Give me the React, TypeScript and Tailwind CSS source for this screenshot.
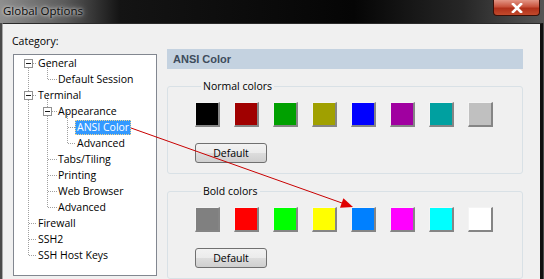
import React from 'react';

type Row = { label: string; level: 0 | 1 | 2; selected?: boolean };

const rows: Row[] = [
  { label: 'General', level: 0 },
  { label: 'Default Session', level: 1 },
  { label: 'Terminal', level: 0 },
  { label: 'Appearance', level: 1 },
  { label: 'ANSI Color', level: 2, selected: true },
  { label: 'Advanced', level: 2 },
  { label: 'Tabs/Tiling', level: 1 },
  { label: 'Printing', level: 1 },
  { label: 'Web Browser', level: 1 },
  { label: 'Advanced', level: 1 },
  { label: 'Firewall', level: 0 },
  { label: 'SSH2', level: 0 },
  { label: 'SSH Host Keys', level: 0 },
];

const indent = ['pl-[22px]', 'pl-[42px]', 'pl-[61px]'];

const normalColors = [
  'bg-[#000000]',
  'bg-[#a00000]',
  'bg-[#00a000]',
  'bg-[#a0a000]',
  'bg-[#0000ff]',
  'bg-[#a000a0]',
  'bg-[#00a0a0]',
  'bg-[#c0c0c0]',
];

const boldColors = [
  'bg-[#808080]',
  'bg-[#ff0000]',
  'bg-[#00ff00]',
  'bg-[#ffff00]',
  'bg-[#0080ff]',
  'bg-[#ff00ff]',
  'bg-[#00ffff]',
  'bg-[#ffffff]',
];

// dotted connector lines + expander boxes of the tree view
function TreeLines() {
  const cy = (i: number) => 8 + 16 * i + 0.5;
  const h = (x1: number, x2: number, i: number) => (
    <line key={`h${i}`} x1={x1 + 0.5} x2={x2 + 0.5} y1={cy(i)} y2={cy(i)} />
  );
  const v = (x: number, a: number, b: number) => (
    <line key={`v${x}${a}`} x1={x + 0.5} x2={x + 0.5} y1={cy(a)} y2={cy(b)} />
  );
  const box = (x: number, i: number) => (
    <g key={`b${i}`}>
      <rect x={x - 4 + 0.5} y={cy(i) - 4.5} width={8} height={8} fill="#fff" stroke="#919191" />
      <line x1={x - 2} x2={x + 3} y1={cy(i)} y2={cy(i)} stroke="#1c1c1c" />
    </g>
  );
  return (
    <svg className="absolute inset-0 pointer-events-none" width="142" height="220" shapeRendering="crispEdges">
      <g stroke="#a0a0a0" strokeDasharray="1 1">
        {v(14, 0, 12)}
        {v(33, 0, 1)}
        {v(33, 2, 9)}
        {v(53, 3, 5)}
        {[0, 2, 10, 11, 12].map((i) => h(14, 22, i))}
        {[1, 3, 6, 7, 8, 9].map((i) => h(33, 42, i))}
        {[4, 5].map((i) => h(53, 61, i))}
      </g>
      {box(14, 0)}
      {box(14, 2)}
      {box(33, 3)}
    </svg>
  );
}

function ColorGroup({ title, colors }: { title: string; colors: string[] }) {
  return (
    <fieldset className="mt-[10px] border border-[#d9e1e6] rounded-[3px] pl-[27px] pb-[10px]">
      <legend className="ml-[6px] px-[2px] leading-[15px]">{title}</legend>
      <div className="flex gap-[14px] pt-[8px]">
        {colors.map((c) => (
          <div
            key={c}
            className={`w-[25px] h-[25px] border-t border-l border-r-2 border-b-2 border-t-[#f4f4f4] border-l-[#f4f4f4] border-r-[#858585] border-b-[#858585] ${c}`}
          />
        ))}
      </div>
      <button className="mt-[16px] w-[72px] h-[20px] rounded-[3px] border border-[#707070] bg-[linear-gradient(#f2f2f2,#ebebeb_50%,#dddddd_50%,#cfcfcf)] leading-[18px] text-center">
        Default
      </button>
    </fieldset>
  );
}

export default function App() {
  return (
    <div className="relative w-[544px] h-[279px] overflow-hidden flex flex-col bg-[#4a4a4a] font-['Open_Sans',sans-serif] text-[10.5px] text-black">
      <div className="h-[23px] shrink-0 flex items-start justify-between bg-[linear-gradient(to_right,#8e8e8e_0%,#5a5a5a_12%,#141414_22%,#050505_65%,#262626_85%,#555555_100%)]">
        <span className="pl-[3px] pt-[2px] text-[11.5px] leading-[17px] text-[#0a0a0a] [text-shadow:0_0_6px_#d8d8d8,0_0_3px_#e8e8e8]">
          Global Options
        </span>
        <div className="mr-[4px] w-[47px] h-[16px] rounded-b-[4px] border border-t-0 border-[#3b1008] bg-[linear-gradient(#e39585,#c8523c_45%,#b0301a_55%,#c24a2c)] flex items-center justify-center">
          <svg width="12" height="10" viewBox="0 0 12 10">
            <path d="M2 1 L10 9 M10 1 L2 9" stroke="#fff" strokeWidth="2.6" strokeLinecap="square" />
          </svg>
        </div>
      </div>

      <div className="flex-1 flex items-start ml-[2px] mr-[1px] pl-[9px] bg-[#f0f0f0] border-t border-t-[#2a2a2a] border-l border-l-[#a8a8a8] border-r-[3px] border-r-[#101010]">
        <div className="w-[145px] flex flex-col pt-[10px]">
          <div className="leading-[15px] mb-[5px]">Category:</div>
          <div className="relative ml-[1px] h-[222px] border border-[#828790] bg-white">
            <TreeLines />
            {rows.map((r, i) => (
              <div key={i} className={`relative h-[16px] flex items-center ${indent[r.level]}`}>
                {r.selected ? (
                  <span className="h-[15px] px-[1px] leading-[13px] bg-[#3399ff] text-white border border-dotted border-[#f3d58c]">
                    {r.label}
                  </span>
                ) : (
                  <span className="px-[2px] leading-[16px]">{r.label}</span>
                )}
              </div>
            ))}
          </div>
        </div>

        <div className="ml-[10px] w-[356px] pt-[25px] flex flex-col">
          <div className="h-[20px] pl-[6px] flex items-center bg-[#c4d2e0] font-['Liberation_Sans',sans-serif] font-bold text-[11px] text-[#3e4c5c]">
            ANSI Color
          </div>
          <ColorGroup title="Normal colors" colors={normalColors} />
          <ColorGroup title="Bold colors" colors={boldColors} />
        </div>
      </div>

      <svg className="absolute inset-0 pointer-events-none" width="544" height="279">
        <line x1="131" y1="128" x2="342" y2="203" stroke="#c80000" strokeWidth="1" />
        <polygon points="353,207 340,207.7 343.4,198.3" fill="#e00000" />
      </svg>
    </div>
  );
}
